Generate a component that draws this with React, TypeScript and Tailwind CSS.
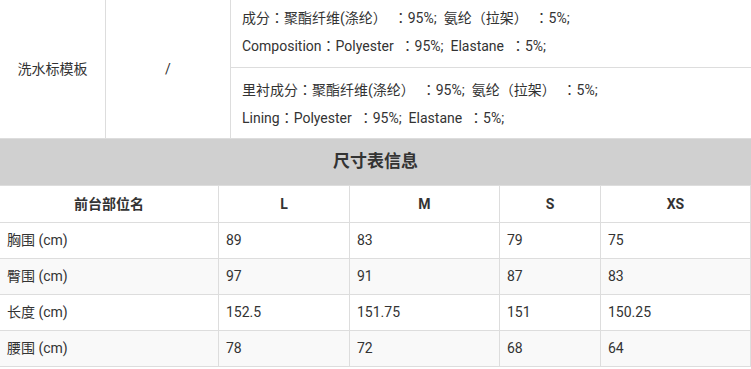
const C = () => (
  <span className="leading-none" style={{ fontFamily: '"Noto Sans CJK TC", sans-serif' }}>
    ：
  </span>
)

export default function App() {
  const sizes = ['L', 'M', 'S', 'XS']
  const rows = [
    { name: '胸围 (cm)', values: ['89', '83', '79', '75'] },
    { name: '臀围 (cm)', values: ['97', '91', '87', '83'] },
    { name: '长度 (cm)', values: ['152.5', '151.75', '151', '150.25'] },
    { name: '腰围 (cm)', values: ['78', '72', '68', '64'] },
  ]

  const cell = 'border-r border-b border-[#dddddd] px-[7px] flex items-center'
  const line = 'h-[28px] leading-[28px]'

  return (
    <div
      className="w-[751px] bg-white text-[14px] text-[#333333]"
      style={{ fontFamily: 'Roboto, "Noto Sans CJK SC", sans-serif' }}
    >
      {/* 洗水标 */}
      <div className="flex border-b border-[#dddddd]">
        <div className="w-[106px] border-r border-[#dddddd] flex items-center justify-center">
          洗水标模板
        </div>
        <div className="w-[125px] border-r border-[#dddddd] flex items-center justify-center">
          /
        </div>
        <div className="flex-1 flex flex-col">
          <div className="px-[11px] pt-[4px] pb-[7px] border-b border-[#dddddd] whitespace-pre">
            <p className={line}>
              成分<C />聚酯纤维(涤纶）  <C />95%;  氨纶（拉架）  <C />5%;
            </p>
            <p className={line}>
              Composition<C />Polyester  <C />95%;  Elastane  <C />5%;
            </p>
          </div>
          <div className="px-[11px] pt-[8px] pb-[6px] whitespace-pre">
            <p className={line}>
              里衬成分<C />聚酯纤维(涤纶）  <C />95%;  氨纶（拉架）  <C />5%;
            </p>
            <p className={line}>
              Lining<C />Polyester  <C />95%;  Elastane  <C />5%;
            </p>
          </div>
        </div>
      </div>

      {/* 尺寸表 */}
      <div className="h-[47px] bg-[#d0d0d0] border-b border-[#dddddd] flex items-center justify-center text-[17px] font-bold">
        尺寸表信息
      </div>

      <div className="grid grid-cols-[219px_131px_150px_101px_1fr]">
        <div className={`${cell} h-[37px] justify-center font-bold`}>前台部位名</div>
        {sizes.map((s) => (
          <div key={s} className={`${cell} h-[37px] justify-center font-bold`}>
            {s}
          </div>
        ))}
        {rows.map((r, i) => (
          <div key={r.name} className="contents">
            <div className={`${cell} h-[36px] ${i % 2 === 1 ? 'bg-[#f9f9f9]' : 'bg-white'}`}>{r.name}</div>
            {r.values.map((v, j) => (
              <div key={j} className={`${cell} h-[36px] ${i % 2 === 1 ? 'bg-[#f9f9f9]' : 'bg-white'}`}>
                {v}
              </div>
            ))}
          </div>
        ))}
      </div>
    </div>
  )
}
